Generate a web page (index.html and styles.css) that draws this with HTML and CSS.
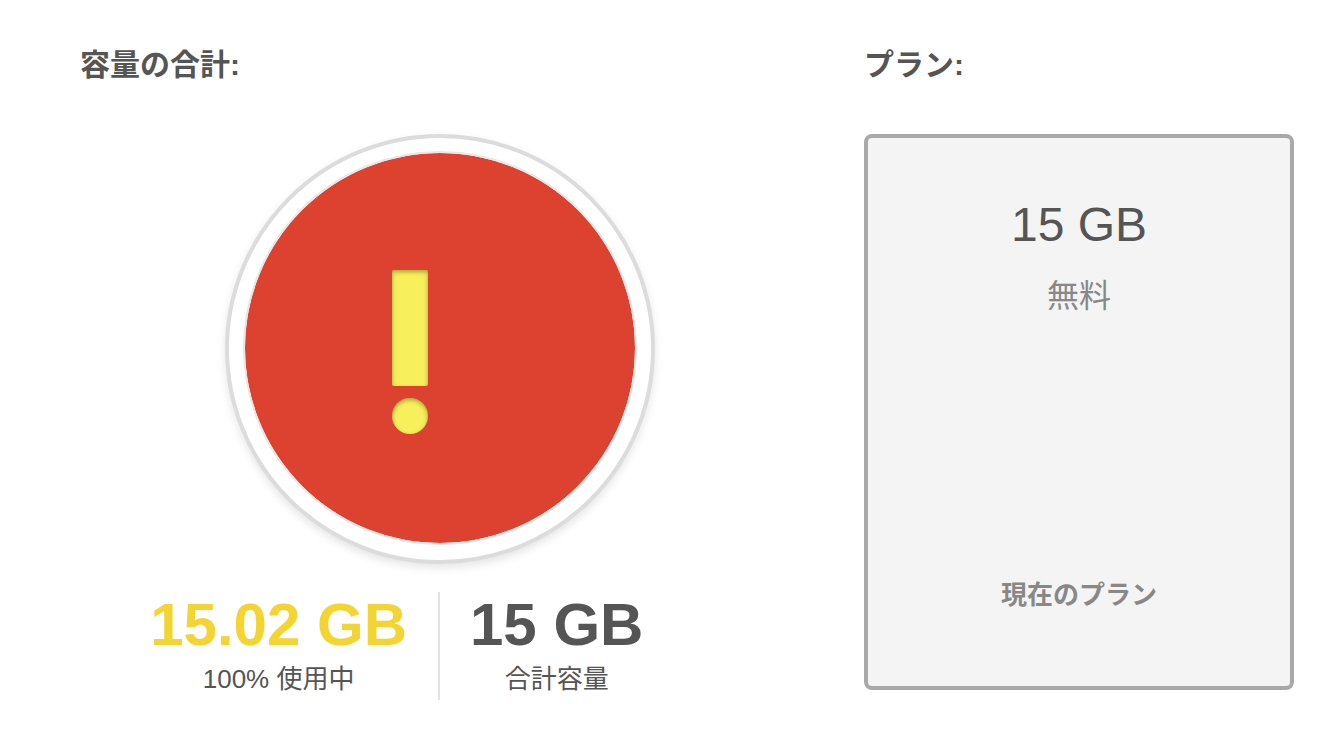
FILE: index.html
```html
<!DOCTYPE html>
<html lang="ja">
<head>
<meta charset="utf-8">
<meta name="viewport" content="width=device-width, initial-scale=1">
<title>容量</title>
<link rel="stylesheet" href="styles.css">
</head>
<body>
<main class="storage">
  <section class="usage">
    <h2 class="heading">容量の合計:</h2>
    <div class="gauge" role="img" aria-label="容量超過">
      <div class="gauge-fill">
        <div class="alert">
          <span class="alert-bar"></span>
          <span class="alert-dot"></span>
        </div>
      </div>
    </div>
    <div class="stats">
      <div class="stat stat-used">
        <strong class="stat-value">15.02 GB</strong>
        <span class="stat-label">100% 使用中</span>
      </div>
      <div class="stat stat-total">
        <strong class="stat-value">15 GB</strong>
        <span class="stat-label">合計容量</span>
      </div>
    </div>
  </section>
  <section class="plans">
    <h2 class="heading">プラン:</h2>
    <div class="plan">
      <div class="plan-size">15 GB</div>
      <div class="plan-price">無料</div>
      <div class="plan-status">現在のプラン</div>
    </div>
  </section>
</main>
</body>
</html>
```
FILE: styles.css
```css
* {
  box-sizing: border-box;
}

body {
  margin: 0;
  background: #fff;
  color: #555;
  font-family: "Liberation Sans", "Noto Sans CJK JP", sans-serif;
}

.storage {
  display: grid;
  grid-template-columns: 720fr 430fr;
  column-gap: 64px;
  padding: 45px 28px 52px 80px;
}

.usage,
.plans {
  display: flex;
  flex-direction: column;
}

.heading {
  margin: 0 0 49px;
  font-size: 30px;
  line-height: 40px;
  font-weight: bold;
}

.gauge {
  align-self: center;
  padding: 13px 14px 15px;
  border: 4px solid #dcdcdc;
  border-radius: 50%;
  background: #fff;
  box-shadow: 0 4px 8px rgba(0, 0, 0, 0.1);
}

.gauge-fill {
  display: flex;
  justify-content: center;
  width: 394px;
  height: 394px;
  padding: 117px 60px 0 0;
  border: 2px solid #e8e8e8;
  border-radius: 50%;
  background: #dd4130;
  background-clip: padding-box;
}

.alert {
  display: flex;
  flex-direction: column;
  gap: 12px;
}

.alert-bar,
.alert-dot {
  width: 36px;
  background: #f7ef5c;
  box-shadow: inset 0 2px 4px rgba(60, 50, 0, 0.4);
}

.alert-bar {
  height: 116px;
  border-radius: 2px;
}

.alert-dot {
  height: 36px;
  border-radius: 50%;
}

.stats {
  display: grid;
  grid-template-columns: 1fr 1fr;
  margin-top: 28px;
}

.stat {
  display: flex;
  flex-direction: column;
  align-items: center;
  height: 108px;
}

.stat-used {
  justify-self: end;
  padding-right: 31px;
  border-right: 2px solid #e2e2e2;
}

.stat-total {
  justify-self: start;
  padding-left: 30px;
}

.stat-value {
  font-size: 60px;
  line-height: 66px;
}

.stat-used .stat-value {
  color: #f4d433;
}

.stat-label {
  font-size: 26px;
  line-height: 42px;
}

.plan {
  display: flex;
  flex-direction: column;
  align-items: center;
  min-height: 556px;
  padding: 58px 20px 73px;
  border: 4px solid #a9a9a9;
  border-radius: 8px;
  background: #f4f4f4;
}

.plan-size {
  font-size: 48px;
  line-height: 58px;
}

.plan-price {
  margin-top: 20px;
  color: #888;
  font-size: 32px;
  line-height: 44px;
}

.plan-status {
  margin-top: auto;
  color: #888;
  font-size: 26px;
  line-height: 36px;
  font-weight: bold;
}
```
